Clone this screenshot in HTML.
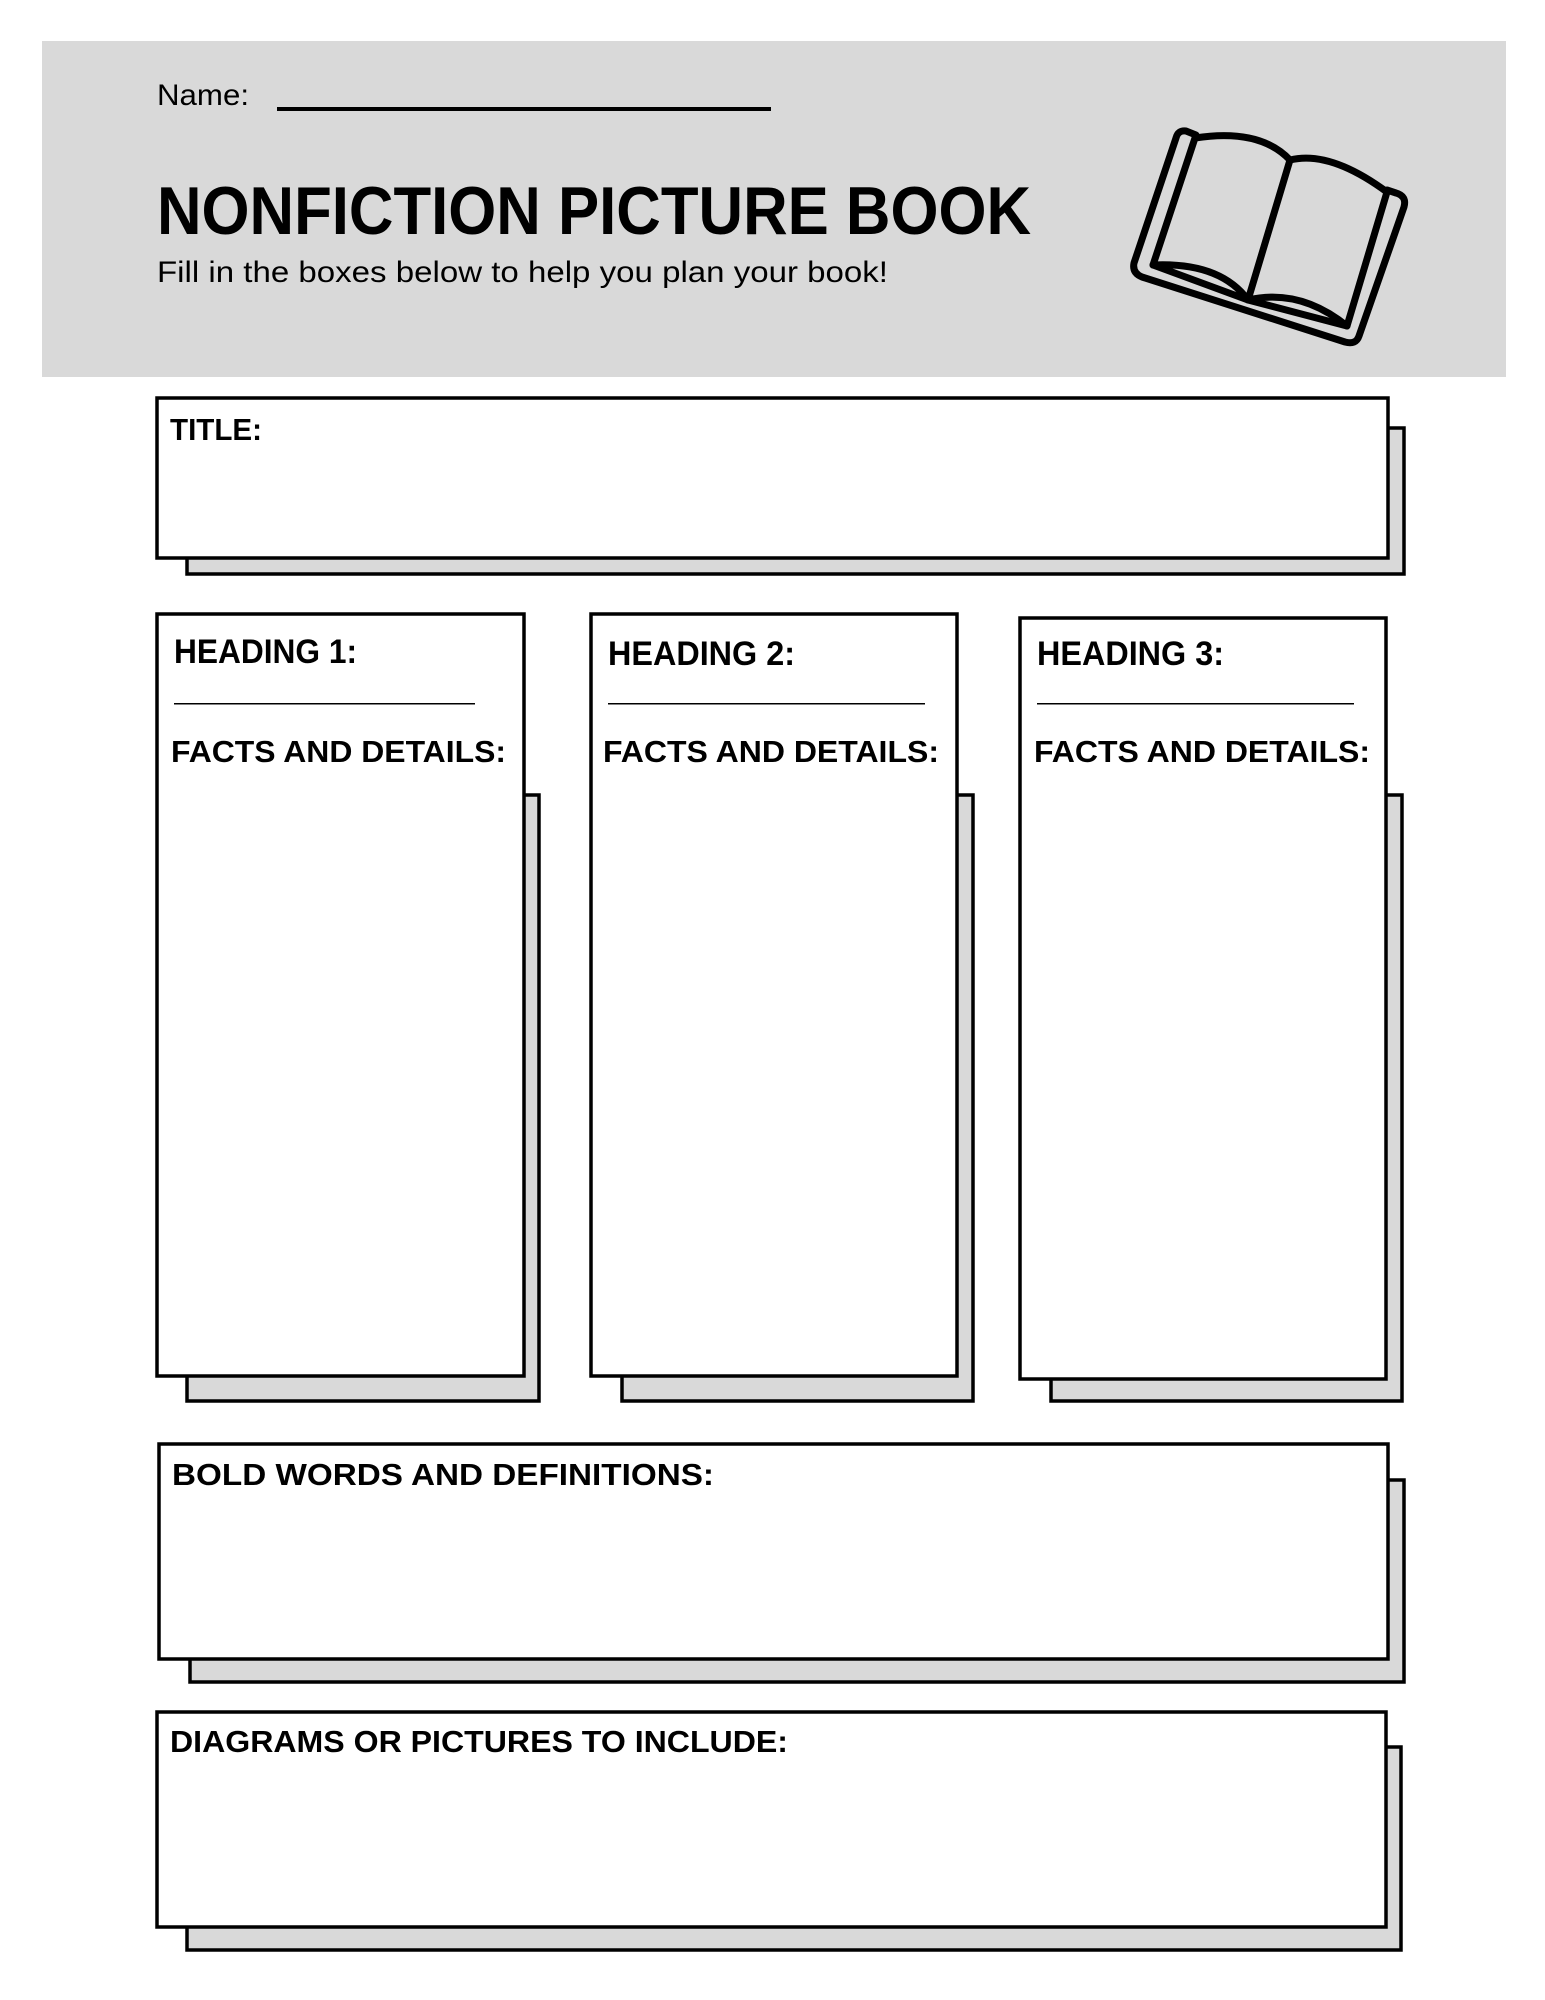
<!DOCTYPE html>
<html><head><meta charset="utf-8"><style>html,body{margin:0;padding:0;background:#fff}svg{display:block}</style></head>
<body>
<svg width="1545" height="2000" viewBox="0 0 1545 2000" xmlns="http://www.w3.org/2000/svg" font-family="Liberation Sans, sans-serif">
<rect x="42" y="41" width="1464" height="336" fill="#d9d9d9"/>
<text x="157" y="105" font-size="30" textLength="92" lengthAdjust="spacingAndGlyphs">Name:</text>
<rect x="277" y="107" width="494" height="4" fill="#000"/>
<text x="157" y="234" font-size="68" font-weight="bold" textLength="874" lengthAdjust="spacingAndGlyphs">NONFICTION PICTURE BOOK</text>
<text x="157" y="282" font-size="30" textLength="731" lengthAdjust="spacingAndGlyphs">Fill in the boxes below to help you plan your book!</text>
<g fill="none" stroke="#000" stroke-width="7" stroke-linejoin="round" stroke-linecap="round">
<path d="M1196,135 L1186,131 Q1178,130 1176,138 L1134,263 Q1132,273 1142,277 L1345,342 Q1356,345 1359,336 L1404,207 Q1407,196 1396,193 L1387,190"/>
<path d="M1195,138 Q1260,128 1290,160 Q1330,150 1387,192 L1347,326 Q1300,288 1248,300 Q1220,262 1153,265 Z"/>
<path d="M1290,160 L1248,300"/>
<path d="M1153,265 L1248,300 L1347,326"/>
</g>
<g stroke="#000" stroke-width="3.5">
<rect x="187" y="428" width="1217" height="146" fill="#d9d9d9"/>
<rect x="157" y="398" width="1231" height="160" fill="#fff"/>
<rect x="187" y="795" width="352" height="606" fill="#d9d9d9"/>
<rect x="157" y="614" width="367" height="762" fill="#fff"/>
<rect x="622" y="795" width="351" height="606" fill="#d9d9d9"/>
<rect x="591" y="614" width="366" height="762" fill="#fff"/>
<rect x="1051" y="795" width="351" height="606" fill="#d9d9d9"/>
<rect x="1020" y="618" width="366" height="761" fill="#fff"/>
<rect x="190" y="1480" width="1214" height="202" fill="#d9d9d9"/>
<rect x="159" y="1444" width="1229" height="215" fill="#fff"/>
<rect x="187" y="1747" width="1214" height="203" fill="#d9d9d9"/>
<rect x="157" y="1712" width="1229" height="215" fill="#fff"/>
</g>
<g font-weight="bold">
<text x="170" y="440" font-size="31" textLength="92" lengthAdjust="spacingAndGlyphs">TITLE:</text>
<text x="174" y="663" font-size="34" textLength="183" lengthAdjust="spacingAndGlyphs">HEADING 1:</text>
<text x="171" y="762" font-size="31" textLength="335" lengthAdjust="spacingAndGlyphs">FACTS AND DETAILS:</text>
<text x="608" y="665" font-size="34" textLength="187" lengthAdjust="spacingAndGlyphs">HEADING 2:</text>
<text x="603" y="762" font-size="31" textLength="336" lengthAdjust="spacingAndGlyphs">FACTS AND DETAILS:</text>
<text x="1037" y="665" font-size="34" textLength="187" lengthAdjust="spacingAndGlyphs">HEADING 3:</text>
<text x="1034" y="762" font-size="31" textLength="336" lengthAdjust="spacingAndGlyphs">FACTS AND DETAILS:</text>
<text x="172" y="1485" font-size="31" textLength="542" lengthAdjust="spacingAndGlyphs">BOLD WORDS AND DEFINITIONS:</text>
<text x="170" y="1752" font-size="31" textLength="618" lengthAdjust="spacingAndGlyphs">DIAGRAMS OR PICTURES TO INCLUDE:</text>
</g>
<g fill="#000">
<rect x="174" y="703" width="301" height="1.5"/>
<rect x="608" y="703" width="317" height="1.5"/>
<rect x="1037" y="703" width="317" height="1.5"/>
</g>
</svg>
</body></html>
